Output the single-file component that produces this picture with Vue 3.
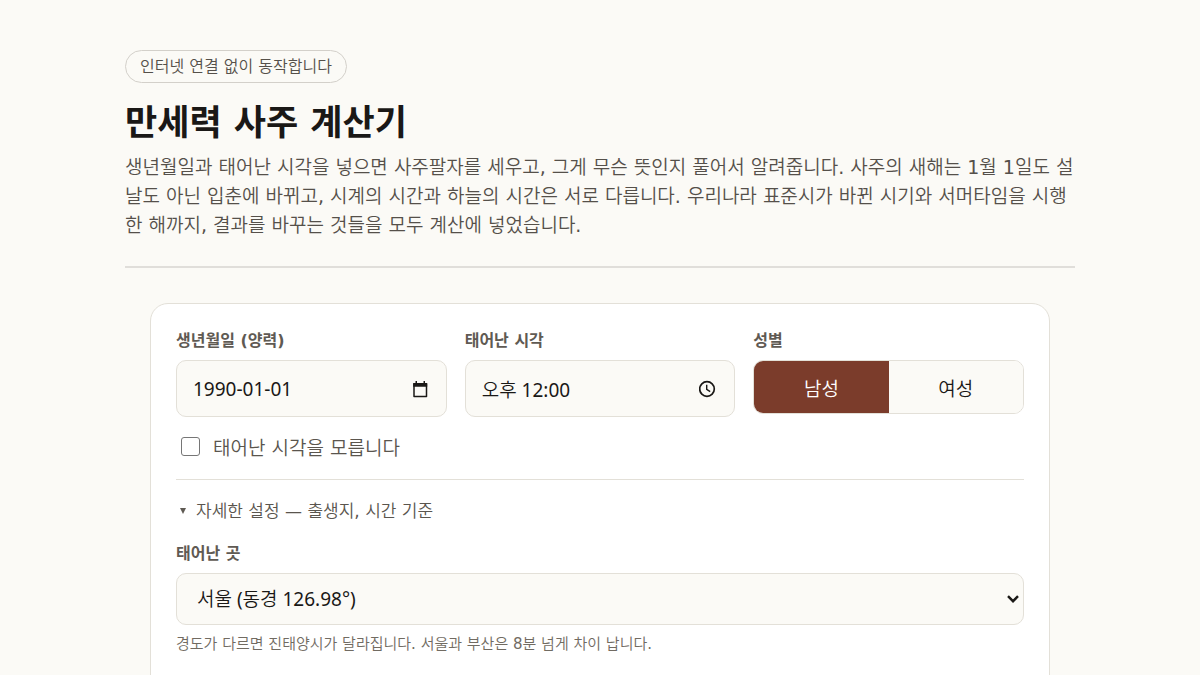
<script setup>
import { ref } from 'vue'

const birthDate = ref('1990-01-01')
const birthTime = ref('오후 12:00')
const gender = ref('male')
const unknownTime = ref(false)
const place = ref('seoul')
</script>

<template>
  <div class="page">
    <header class="intro">
      <span class="badge">인터넷 연결 없이 동작합니다</span>
      <h1>만세력 사주 계산기</h1>
      <p>
        생년월일과 태어난 시각을 넣으면 사주팔자를 세우고, 그게 무슨 뜻인지 풀어서 알려줍니다. 사주의 새해는 1월 1일도 설날도 아닌 입춘에 바뀌고, 시계의 시간과 하늘의 시간은 서로 다릅니다. 우리나라 표준시가 바뀐 시기와 서머타임을 시행한 해까지, 결과를 바꾸는 것들을 모두 계산에 넣었습니다.
      </p>
    </header>

    <form class="card" @submit.prevent>
      <div class="fields">
        <div class="field">
          <label class="label" for="date">생년월일 (양력)</label>
          <div class="control">
            <input id="date" v-model="birthDate" type="text" />
            <button type="button" class="picker" aria-label="날짜 선택">
              <svg viewBox="0 0 18 18" width="18" height="18">
                <path d="M3 4h12.500v12.500H3z" fill="none" stroke="#1a1816" stroke-width="1.500" stroke-linejoin="round" />
                <path d="M2.200 3h14v3.800h-14zM4.500 1h1.500v3H4.500zM12.500 1H14v3h-1.500z" fill="#1a1816" />
              </svg>
            </button>
          </div>
        </div>
        <div class="field">
          <label class="label" for="time">태어난 시각</label>
          <div class="control">
            <input id="time" v-model="birthTime" type="text" />
            <button type="button" class="picker" aria-label="시각 선택">
              <svg viewBox="0 0 18 18" width="18" height="18" fill="none" stroke="#1a1816">
                <circle cx="8" cy="9" r="7.300" stroke-width="1.700" />
                <path d="M7.700 4.800v4.600l3.500 2.300" stroke-width="1.400" />
              </svg>
            </button>
          </div>
        </div>
        <fieldset class="field">
          <legend class="label">성별</legend>
          <div class="toggle">
            <button type="button" :class="{ on: gender === 'male' }" :aria-pressed="gender === 'male'" @click="gender = 'male'">남성</button>
            <button type="button" :class="{ on: gender === 'female' }" :aria-pressed="gender === 'female'" @click="gender = 'female'">여성</button>
          </div>
        </fieldset>
      </div>

      <label class="check">
        <input v-model="unknownTime" type="checkbox" />
        <span>태어난 시각을 모릅니다</span>
      </label>

      <details open>
        <summary>
          <svg class="marker" viewBox="0 0 6 6" width="6" height="6"><path d="M0 0h6L3 6z" fill="#5f5a53" /></svg>
          자세한 설정 — 출생지, 시간 기준
        </summary>
        <div class="field">
          <label class="label" for="place">태어난 곳</label>
          <div class="select">
            <select id="place" v-model="place">
              <option value="seoul">서울 (동경 126.98°)</option>
              <option value="busan">부산 (동경 129.08°)</option>
            </select>
            <svg class="chevron" viewBox="0 0 12 8" width="12" height="8">
              <path d="M1 1.200l5 5 5-5" fill="none" stroke="#1a1816" stroke-width="2.400" />
            </svg>
          </div>
          <p class="hint">경도가 다르면 진태양시가 달라집니다. 서울과 부산은 8분 넘게 차이 납니다.</p>
        </div>
      </details>
    </form>
  </div>
</template>

<style>
body {
  background: #fbfaf6;
}
</style>

<style scoped>
.page {
  box-sizing: border-box;
  max-width: 950px;
  margin: 0 auto;
  padding-top: 50px;
  color: #1a1816;
  font-family: "DejaVu Sans", "Noto Sans CJK KR DemiLight", "Noto Sans CJK KR", sans-serif;
  font-size: 19px;
}

.intro {
  padding-bottom: 26px;
  border-bottom: 2px solid #e0deda;
}

.badge {
  display: inline-block;
  box-sizing: border-box;
  padding: 0 14px;
  border: 1px solid #d3d0ca;
  border-radius: 17px;
  color: #55504a;
  font-size: 16px;
  line-height: 31px;
  vertical-align: top;
}

h1,
.label {
  font-family: "DejaVu Sans", "Noto Sans CJK KR", sans-serif;
  font-weight: 700;
}

h1 {
  margin: 17px 0 7px;
  font-size: 35px;
  line-height: 46px;
}

.intro p {
  margin: 0;
  color: #55504a;
  line-height: 29px;
  word-break: break-all;
}

.card {
  box-sizing: border-box;
  margin: 35px 25px 0;
  padding: 25px 25px 40px;
  border: 1px solid #e3e0d8;
  border-radius: 18px;
  background: #fff;
}

.fields {
  display: grid;
  grid-template-columns: repeat(3, minmax(0, 1fr));
  gap: 18px;
}

.field {
  min-width: 0;
  margin: 0;
  padding: 0;
  border: 0;
}

.label {
  display: block;
  padding: 0;
  margin-bottom: 7px;
  color: #5f5a53;
  font-size: 16px;
  line-height: 24px;
}

.control {
  display: flex;
  align-items: center;
  box-sizing: border-box;
  height: 57px;
  padding: 0 17px 0 16px;
  border: 1px solid #e3e0d8;
  border-radius: 10px;
  background: #fbfaf6;
}

.control input,
select {
  color: inherit;
  font-family: "Noto Sans", "Noto Sans CJK KR DemiLight", "Noto Sans CJK KR", sans-serif;
  font-size: 19px;
}

.control input {
  flex: 1;
  min-width: 0;
  padding: 0;
  border: 0;
  outline: 0;
  background: transparent;
}

.picker {
  display: flex;
  padding: 0;
  border: 0;
  background: transparent;
}

.toggle {
  display: flex;
  overflow: hidden;
  box-sizing: border-box;
  height: 54px;
  border: 1px solid #e3e0d8;
  border-radius: 10px;
}

.toggle button {
  flex: 1;
  padding: 0;
  border: 0;
  background: #fbfaf6;
  color: inherit;
  font: inherit;
}

.toggle .on {
  background: #7b3c2b;
  color: #fff;
}

.check {
  display: flex;
  align-items: center;
  gap: 13px;
  height: 28px;
  margin-top: 15px;
  padding-left: 5px;
  color: #5a554e;
}

.check input {
  appearance: none;
  box-sizing: border-box;
  width: 19px;
  height: 19px;
  margin: 0;
  border: 1px solid #767676;
  border-radius: 3px;
  background: #fff;
}

.check input:checked {
  background: #7b3c2b;
}

details {
  margin-top: 19px;
  padding-top: 17px;
  border-top: 1px solid #e3e0d8;
}

summary {
  display: flex;
  align-items: center;
  gap: 10px;
  margin-bottom: 17px;
  padding-left: 4px;
  color: #5a554e;
  font-size: 17px;
  line-height: 28px;
}

.select {
  display: grid;
  align-items: center;
}

.select > * {
  grid-area: 1 / 1;
}

select {
  appearance: none;
  box-sizing: border-box;
  width: 100%;
  height: 52px;
  padding: 0 20px;
  border: 1px solid #e3e0d8;
  border-radius: 10px;
  background: #fbfaf6;
}

.chevron {
  justify-self: end;
  margin-right: 5px;
  pointer-events: none;
}

.hint {
  margin: 8px 0 0;
  color: #716b62;
  font-size: 15px;
  line-height: 22px;
}
</style>
